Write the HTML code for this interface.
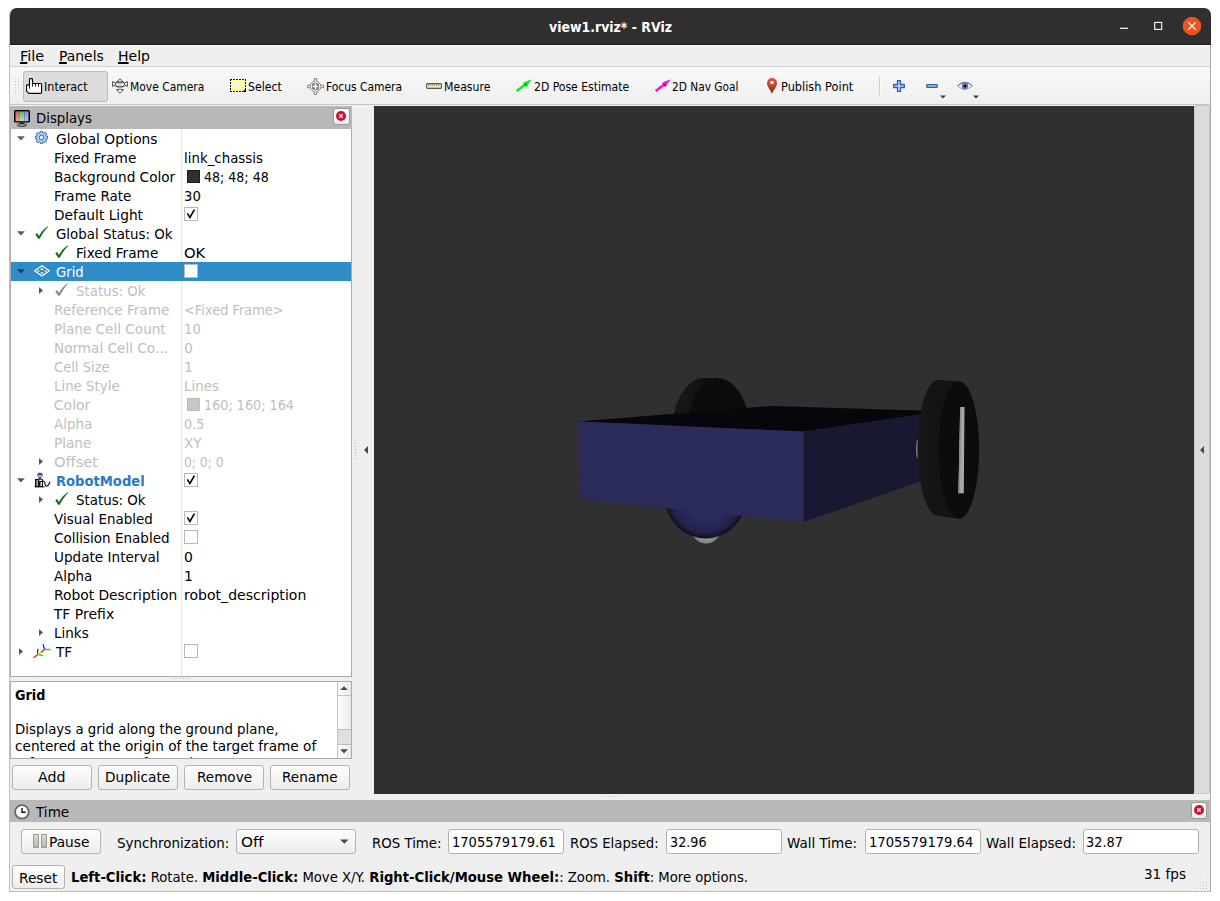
<!DOCTYPE html>
<html lang="en"><head><meta charset="utf-8"><title>view1.rviz* - RViz</title>
<style>
html,body{margin:0;padding:0;background:#fff;}
body{width:1220px;height:901px;position:relative;overflow:hidden;font-family:"DejaVu Sans", "Liberation Sans", sans-serif;font-size:14px;}
#win div,#win svg{position:absolute;box-sizing:border-box;}
#win{position:absolute;left:0;top:0;width:1220px;height:901px;}
u{text-decoration-thickness:2px;text-underline-offset:1px;}
.t{position:absolute;white-space:nowrap;line-height:20px;height:20px;transform-origin:0 50%;}
</style></head><body>
<div id="win">
<div style="left:9px;top:8px;width:1202px;height:884px;background:#efefef;border-radius:7px 7px 0 0;border:1px solid #c0c0c0;border-right-color:#a8a8a8;border-top:none;"></div>
<div style="left:10px;top:8px;width:1201px;height:37px;background:#302e2f;border-radius:7px 7px 0 0;"></div>
<div style="left:10px;top:44px;width:1201px;height:1px;background:#1c1b1c;"></div>
<svg style="left:1110px;top:14px" width="96" height="26" viewBox="1110 14 96 26"><rect x="1120" y="27.7" width="8" height="1.2" fill="#fff"/><rect x="1154.7" y="22.4" width="7" height="7" fill="none" stroke="#fff" stroke-width="1.1"/><circle cx="1192" cy="26" r="9.3" fill="#e95420"/><path d="M1188.4 22.4 L1195.6 29.6 M1195.6 22.4 L1188.4 29.6" stroke="#fff" stroke-width="1.3" fill="none"/></svg>
<div style="left:10px;top:45px;width:1200px;height:21px;background:#efefef;"></div>
<div style="left:10px;top:45px;width:1200px;height:1px;background:#fbfbfb;"></div>
<div style="left:10px;top:66px;width:1200px;height:1px;background:#d2d2d2;"></div>
<div style="left:10px;top:67px;width:1200px;height:37px;background:linear-gradient(#f8f8f8,#efefef);"></div>
<div style="left:10px;top:104px;width:1200px;height:1px;background:#c3c3c3;"></div>
<div style="left:10px;top:105px;width:1200px;height:1px;background:#f4f4f4;"></div>
<svg style="left:14px;top:77px" width="6" height="18" viewBox="0 0 6 18"><rect x="1" y="1" width="1" height="1" fill="#c4c4c4"/><rect x="4" y="1" width="1" height="1" fill="#c4c4c4"/><rect x="1" y="4" width="1" height="1" fill="#c4c4c4"/><rect x="4" y="4" width="1" height="1" fill="#c4c4c4"/><rect x="1" y="7" width="1" height="1" fill="#c4c4c4"/><rect x="4" y="7" width="1" height="1" fill="#c4c4c4"/><rect x="1" y="10" width="1" height="1" fill="#c4c4c4"/><rect x="4" y="10" width="1" height="1" fill="#c4c4c4"/><rect x="1" y="13" width="1" height="1" fill="#c4c4c4"/><rect x="4" y="13" width="1" height="1" fill="#c4c4c4"/><rect x="1" y="16" width="1" height="1" fill="#c4c4c4"/><rect x="4" y="16" width="1" height="1" fill="#c4c4c4"/></svg>
<div style="left:23px;top:71px;width:85px;height:31px;background:#dcdcdc;border:1px solid #b9b9b9;border-radius:3px;"></div>
<svg style="left:26px;top:78px" width="17" height="17" viewBox="0 0 17 17"><path d="M3.5 6.8 V1.7 Q3.5 0.4 5 0.4 Q6.5 0.4 6.5 1.7 V5.5 H14.8 Q15.6 5.5 15.6 6.5 V14.2 Q15.6 15.4 14.4 15.4 H2.9 L0.5 13.2 V7.9 Q0.5 6.8 1.6 6.8 Z" fill="#fff" stroke="#000" stroke-width="1.15" stroke-linejoin="round"/><path d="M3.5 6.8 V10.6 M6.5 5.5 V8.6 M9.5 5.8 V8.6 M12.5 5.8 V8.6" stroke="#222" stroke-width="1" fill="none"/></svg>
<svg style="left:112px;top:78px" width="16" height="16" viewBox="0 0 16 16"><g fill="#fff" stroke="#4a4a4a" stroke-width="1" stroke-linejoin="round"><path d="M8 0.8 L12 4.6 H4 Z"/><path d="M0.6 3.6 L3.6 5.2 L3.6 6.8 L0.6 8.4 Z"/><path d="M15.4 3.6 L12.4 5.2 L12.4 6.8 L15.4 8.4 Z"/><path d="M8 15.2 L4.4 11.6 H11.6 Z"/><ellipse cx="8" cy="6.2" rx="4.6" ry="2.4" fill="none"/><path d="M3.4 8.2 Q8 10.8 12.6 8.2" fill="none"/></g><rect x="7.2" y="4.6" width="1.6" height="7" fill="#b5b5b5"/></svg>
<svg style="left:230px;top:79px" width="16" height="13" viewBox="0 0 16 13"><g shape-rendering="crispEdges"><rect x="1" y="1" width="14" height="11" fill="#fffd86"/><rect x="2" y="2" width="12" height="9" fill="#fcf6c2"/><rect x="0.5" y="0.5" width="15" height="12" fill="none" stroke="#fff" stroke-width="1"/><path d="M0 0.5 H16 M0 12.5 H16" fill="none" stroke="#1c1c1c" stroke-width="1" stroke-dasharray="2 1"/><path d="M0.5 0 V13 M15.5 0 V13" fill="none" stroke="#000" stroke-width="1" stroke-dasharray="2 1"/></g><path d="M16 9.4 V13 H12.4 Z" fill="#000"/></svg>
<svg style="left:307px;top:78px" width="17" height="17" viewBox="0 0 17 17"><g fill="none" stroke="#7a7a7a" stroke-width="1"><circle cx="8.5" cy="8.5" r="5.3" fill="#fff"/><path d="M7.3 3.4 V0.6 H9.7 V3.4 M7.3 13.6 V16.4 H9.7 V13.6 M3.4 7.3 H0.6 V9.7 H3.4 M13.6 7.3 H16.4 V9.7 H13.6" fill="#fff"/><circle cx="8.5" cy="8.5" r="3.4" stroke="#6e6e6e"/></g><path d="M5.6 5.6 H7.7 V7.7 H5.6 Z M9.3 5.6 H11.4 V7.7 H9.3 Z M5.6 9.3 H7.7 V11.4 H5.6 Z M9.3 9.3 H11.4 V11.4 H9.3 Z" fill="#777"/></svg>
<svg style="left:426px;top:83px" width="16" height="6" viewBox="0 0 16 6"><rect x="0.6" y="0.6" width="14.8" height="4.8" rx="1" fill="#f4edb0" stroke="#585858" stroke-width="1.2"/><rect x="2.3" y="1.2" width="0.8" height="1.7" fill="#777"/><rect x="4.3" y="1.2" width="0.8" height="1.7" fill="#777"/><rect x="6.3" y="1.2" width="0.8" height="1.7" fill="#777"/><rect x="8.3" y="1.2" width="0.8" height="1.7" fill="#777"/><rect x="10.3" y="1.2" width="0.8" height="1.7" fill="#777"/><rect x="12.3" y="1.2" width="0.8" height="1.7" fill="#777"/></svg>
<svg style="left:515px;top:78px" width="18" height="16" viewBox="0 0 18 16"><path d="M0.9 12 L8.8 5.9 L7.95 4.8 L16.8 1.3 L11.25 9 L10.4 7.9 L2.5 14 Z" fill="#00f020"/><path d="M8.9 6 L11.25 9 L12.7 7.2 L10.3 5.4 Z" fill="#009a18" opacity="0.75"/></svg>
<svg style="left:653.5px;top:78px" width="18" height="16" viewBox="0 0 18 16"><path d="M0.9 12 L8.8 5.9 L7.95 4.8 L16.8 1.3 L11.25 9 L10.4 7.9 L2.5 14 Z" fill="#f018d8"/><path d="M8.9 6 L11.25 9 L12.7 7.2 L10.3 5.4 Z" fill="#a00090" opacity="0.75"/></svg>
<svg style="left:766px;top:77px" width="12" height="18" viewBox="0 0 12 18"><defs><linearGradient id="pg" x1="0" y1="0" x2="0" y2="1"><stop offset="0" stop-color="#ee4a2c"/><stop offset="0.45" stop-color="#c8452a"/><stop offset="1" stop-color="#5a3a08"/></linearGradient></defs><path d="M6 16.8 C4.6 13 1 10 1 6 A5 5 0 0 1 11 6 C11 10 7.4 13 6 16.8 Z" fill="url(#pg)"/><circle cx="6" cy="5.6" r="1.8" fill="#fff"/></svg>
<svg style="left:893px;top:80px" width="12" height="12" viewBox="0 0 12 12"><defs><linearGradient id="bg1" x1="0" y1="0" x2="0" y2="1"><stop offset="0" stop-color="#9cc0e6"/><stop offset="1" stop-color="#c9ddf2"/></linearGradient></defs><path d="M4.5 0.7 H7.5 V4.5 H11.3 V7.5 H7.5 V11.3 H4.5 V7.5 H0.7 V4.5 H4.5 Z" fill="url(#bg1)" stroke="#2c62ab" stroke-width="1.3" stroke-linejoin="round"/></svg>
<svg style="left:926px;top:84px" width="12" height="4" viewBox="0 0 12 4"><rect x="0.7" y="0.6" width="10.6" height="2.8" rx="0.6" fill="#a8c8ea" stroke="#2c62ab" stroke-width="1.2"/></svg>
<svg style="left:940px;top:95px" width="6" height="4" viewBox="0 0 6 4"><path d="M0 0.4 H6 L3 3.4 Z" fill="#3c3c3c"/></svg>
<svg style="left:957px;top:80px" width="16" height="12" viewBox="0 0 16 12"><path d="M0.6 6 Q8 -1.2 15.4 6 Q8 12.6 0.6 6 Z" fill="#fff" stroke="#9a9a9a" stroke-width="1"/><path d="M0.8 5.6 Q8 -1 15.2 5.6" fill="none" stroke="#6a6a6a" stroke-width="1"/><circle cx="8" cy="6" r="3.4" fill="#6878c8"/><circle cx="8" cy="6" r="1.5" fill="#0a0a18"/></svg>
<svg style="left:973px;top:95px" width="6" height="4" viewBox="0 0 6 4"><path d="M0 0.4 H6 L3 3.4 Z" fill="#3c3c3c"/></svg>
<div style="left:879px;top:77px;width:1px;height:19px;background:#cfcfcf;"></div>
<div style="left:880px;top:77px;width:1px;height:19px;background:#fbfbfb;"></div>
<div style="left:10px;top:106px;width:342px;height:23px;background:#b8b8b8;"></div>
<div style="left:332.5px;top:108px;width:17px;height:16.5px;background:linear-gradient(#ffffff,#ececec);border:1px solid #999;border-radius:3px;"></div>
<svg style="left:335px;top:110.2px" width="12" height="12" viewBox="-6 -6 12 12"><circle r="5" fill="#cf1030"/><path d="M-1.7 -1.7 L1.7 1.7 M1.7 -1.7 L-1.7 1.7" stroke="#f6dfe3" stroke-width="1.5"/></svg>
<div style="left:10px;top:129px;width:342px;height:548px;background:#fff;border:1px solid #ababab;border-top:none;"></div>
<div style="left:181px;top:129px;width:1px;height:547px;background:#e4e4e4;"></div>
<div style="left:11px;top:262px;width:340px;height:19px;background:#308cc6;"></div>
<div style="left:187px;top:170px;width:13px;height:13px;background:#303030;border:1px solid #1c1c1c;"></div>
<div style="left:187px;top:398px;width:13px;height:13px;background:#c6c6c6;border:1px solid #bdbdbd;"></div>
<svg style="left:14px;top:110px" width="16" height="17" viewBox="0 0 16 17"><defs><linearGradient id="mr" x1="0" y1="0" x2="0" y2="1"><stop offset="0" stop-color="#c46262"/><stop offset="1" stop-color="#f4a4a4"/></linearGradient><linearGradient id="mg" x1="0" y1="0" x2="0" y2="1"><stop offset="0" stop-color="#62ba62"/><stop offset="1" stop-color="#a6eca6"/></linearGradient><linearGradient id="mb" x1="0" y1="0" x2="0" y2="1"><stop offset="0" stop-color="#8a8ae0"/><stop offset="1" stop-color="#bcbcff"/></linearGradient></defs><rect x="0" y="0" width="16" height="12.6" rx="1.6" fill="#000"/><rect x="1.5" y="1.4" width="4.4" height="9.8" fill="url(#mr)"/><rect x="5.9" y="1.4" width="4.4" height="9.8" fill="url(#mg)"/><rect x="10.3" y="1.4" width="4.2" height="9.8" fill="url(#mb)"/><path d="M6.4 12.4 H9.6 L10.4 14.2 H5.6 Z" fill="#000"/><ellipse cx="8" cy="15" rx="4.7" ry="1.2" fill="#d8d8d8" stroke="#111" stroke-width="1"/></svg>
<svg style="left:16.3px;top:135px" width="10" height="7" viewBox="0 0 10 7"><path d="M1 1.2 H8.8 L4.9 5.6 Z" fill="#5a5a5a"/></svg>
<svg style="left:16.3px;top:230px" width="10" height="7" viewBox="0 0 10 7"><path d="M1 1.2 H8.8 L4.9 5.6 Z" fill="#5a5a5a"/></svg>
<svg style="left:16.3px;top:477px" width="10" height="7" viewBox="0 0 10 7"><path d="M1 1.2 H8.8 L4.9 5.6 Z" fill="#5a5a5a"/></svg>
<svg style="left:16.3px;top:268px" width="10" height="7" viewBox="0 0 10 7"><path d="M1 1.2 H8.8 L4.9 5.6 Z" fill="#173d58"/></svg>
<svg style="left:18px;top:647px" width="7" height="10" viewBox="0 0 7 10"><path d="M1 1 V8 L5 4.5 Z" fill="#5a5a5a"/></svg>
<svg style="left:38px;top:286px" width="7" height="10" viewBox="0 0 7 10"><path d="M1 1 V8 L5 4.5 Z" fill="#5a5a5a"/></svg>
<svg style="left:38px;top:457px" width="7" height="10" viewBox="0 0 7 10"><path d="M1 1 V8 L5 4.5 Z" fill="#5a5a5a"/></svg>
<svg style="left:38px;top:495px" width="7" height="10" viewBox="0 0 7 10"><path d="M1 1 V8 L5 4.5 Z" fill="#5a5a5a"/></svg>
<svg style="left:38px;top:628px" width="7" height="10" viewBox="0 0 7 10"><path d="M1 1 V8 L5 4.5 Z" fill="#5a5a5a"/></svg>
<svg style="left:35px;top:131px" width="13" height="13" viewBox="0 0 13 13"><path d="M5.25 0.33 L7.75 0.33 L7.95 2.13 L8.56 2.39 L9.98 1.25 L11.75 3.02 L10.61 4.44 L10.87 5.05 L12.67 5.25 L12.67 7.75 L10.87 7.95 L10.61 8.56 L11.75 9.98 L9.98 11.75 L8.56 10.61 L7.95 10.87 L7.75 12.67 L5.25 12.67 L5.05 10.87 L4.44 10.61 L3.02 11.75 L1.25 9.98 L2.39 8.56 L2.13 7.95 L0.33 7.75 L0.33 5.25 L2.13 5.05 L2.39 4.44 L1.25 3.02 L3.02 1.25 L4.44 2.39 L5.05 2.13 Z" fill="#b4cdea" stroke="#2f6fbd" stroke-width="1" stroke-linejoin="round"/><circle cx="6.5" cy="6.5" r="2.3" fill="#dfeaf7" stroke="#2f6fbd" stroke-width="1"/><circle cx="6.5" cy="6.5" r="0.9" fill="#fff"/></svg>
<svg style="left:35px;top:226px" width="14" height="14" viewBox="0 0 14 14"><path d="M0.3 8.2 L2.2 7.1 L3.9 10 C6 6 9 2.6 12.8 0.2 L13.2 0.8 C10 4 7 8.5 4.7 12.8 L3.1 12.8 Z" fill="#176b1a"/></svg>
<svg style="left:55px;top:245px" width="14" height="14" viewBox="0 0 14 14"><path d="M0.3 8.2 L2.2 7.1 L3.9 10 C6 6 9 2.6 12.8 0.2 L13.2 0.8 C10 4 7 8.5 4.7 12.8 L3.1 12.8 Z" fill="#176b1a"/></svg>
<svg style="left:55px;top:283px" width="14" height="14" viewBox="0 0 14 14"><path d="M0.3 8.2 L2.2 7.1 L3.9 10 C6 6 9 2.6 12.8 0.2 L13.2 0.8 C10 4 7 8.5 4.7 12.8 L3.1 12.8 Z" fill="#8a8a8a"/></svg>
<svg style="left:55px;top:492px" width="14" height="14" viewBox="0 0 14 14"><path d="M0.3 8.2 L2.2 7.1 L3.9 10 C6 6 9 2.6 12.8 0.2 L13.2 0.8 C10 4 7 8.5 4.7 12.8 L3.1 12.8 Z" fill="#176b1a"/></svg>
<svg style="left:34px;top:265px" width="16" height="12" viewBox="0 0 16 12"><path d="M8 0.7 L15.3 5.8 L8 10.9 L0.7 5.8 Z" fill="#2a6f9e" stroke="#fff" stroke-width="1.2" stroke-linejoin="round"/><path d="M8 2.6 L10.2 4.2 L8 5.7 L5.8 4.2 Z M11.5 5 L13.2 5.8 L11.5 7.3 L9.3 5.8 Z M4.5 5 L6.7 5.8 L4.5 7.3 L2.8 5.8 Z M8 6.6 L10.2 7.9 L8 9.4 L5.8 7.9 Z" fill="#b8dcf4"/></svg>
<svg style="left:34px;top:472px" width="17" height="16" viewBox="0 0 17 16"><ellipse cx="6" cy="3" rx="2.6" ry="2.1" fill="#f4f4f4" stroke="#222" stroke-width="0.5"/><path d="M3.6 2.4 Q6 -0.4 8.4 2.4 Z" fill="#2233aa"/><rect x="3.6" y="2.3" width="4.8" height="1" fill="#1a2a9a"/><rect x="1" y="7" width="8" height="8" fill="#111"/><rect x="2.6" y="8" width="1" height="6" fill="#fff"/><rect x="5.2" y="7.6" width="2.6" height="1.4" fill="#fff"/><rect x="6.4" y="10" width="1.6" height="4" fill="#ddd"/><rect x="4.6" y="5.2" width="2.6" height="2" fill="#333"/><path d="M9 9 Q11 9 11 12 Q11.4 14.6 13.4 14 Q15 13 16 9.6" fill="none" stroke="#111" stroke-width="1.2"/><rect x="0.6" y="14.4" width="10" height="1" fill="#111"/></svg>
<svg style="left:33px;top:643px" width="18" height="16" viewBox="0 0 18 16"><g fill="none" stroke-width="1.3" stroke-linecap="round"><path d="M1.2 14.6 L4.6 11.6" stroke="#ff1010"/><path d="M4.7 11 V6.4" stroke="#2020ff"/><path d="M5.2 11.5 L9.6 12.6" stroke="#10e010"/><path d="M5.2 11 L8.6 9" stroke="#f0e010"/><path d="M8.6 9 L11.6 6.6" stroke="#ff1010"/><path d="M11.4 6.2 L10.2 1.6" stroke="#2020ff"/><path d="M11.8 6.5 H17" stroke="#10e010"/></g></svg>
<svg style="left:184px;top:207px" width="14" height="14" viewBox="0 0 14 14"><rect x="0.5" y="0.5" width="13" height="13" fill="#fff" stroke="#b8b8b8" stroke-width="1"/><path d="M3.3 6.4 L5.9 10.4 L10.4 2.6" fill="none" stroke="#000" stroke-width="1.6"/></svg>
<svg style="left:184px;top:264px" width="14" height="14" viewBox="0 0 14 14"><rect x="0.5" y="0.5" width="13" height="13" fill="#fff" stroke="#b8b8b8" stroke-width="1"/></svg>
<svg style="left:184px;top:473px" width="14" height="14" viewBox="0 0 14 14"><rect x="0.5" y="0.5" width="13" height="13" fill="#fff" stroke="#b8b8b8" stroke-width="1"/><path d="M3.3 6.4 L5.9 10.4 L10.4 2.6" fill="none" stroke="#000" stroke-width="1.6"/></svg>
<svg style="left:184px;top:511px" width="14" height="14" viewBox="0 0 14 14"><rect x="0.5" y="0.5" width="13" height="13" fill="#fff" stroke="#b8b8b8" stroke-width="1"/><path d="M3.3 6.4 L5.9 10.4 L10.4 2.6" fill="none" stroke="#000" stroke-width="1.6"/></svg>
<svg style="left:184px;top:530px" width="14" height="14" viewBox="0 0 14 14"><rect x="0.5" y="0.5" width="13" height="13" fill="#fff" stroke="#b8b8b8" stroke-width="1"/></svg>
<svg style="left:184px;top:644px" width="14" height="14" viewBox="0 0 14 14"><rect x="0.5" y="0.5" width="13" height="13" fill="#fff" stroke="#b8b8b8" stroke-width="1"/></svg>
<svg style="left:173px;top:677px" width="20" height="3" viewBox="0 0 20 3"><rect x="1" y="1" width="1" height="1" fill="#bdbdbd"/><rect x="4" y="1" width="1" height="1" fill="#bdbdbd"/><rect x="7" y="1" width="1" height="1" fill="#bdbdbd"/><rect x="10" y="1" width="1" height="1" fill="#bdbdbd"/><rect x="13" y="1" width="1" height="1" fill="#bdbdbd"/><rect x="16" y="1" width="1" height="1" fill="#bdbdbd"/></svg>
<div style="left:10px;top:681px;width:342px;height:78px;background:#fff;border:1px solid #ababab;"></div>
<div style="left:337px;top:682px;width:14px;height:76px;background:linear-gradient(90deg,#fdfdfd,#ececec);border-left:1px solid #c4c4c4;"></div>
<div style="left:338px;top:695px;width:13px;height:1px;background:#c4c4c4;"></div>
<div style="left:338px;top:729px;width:13px;height:16px;background:#dfdfdf;border-top:1px solid #bcbcbc;border-bottom:1px solid #bcbcbc;"></div>
<svg style="left:338px;top:682px" width="13" height="76" viewBox="338 682 13 76"><path d="M340.2 690 L347.8 690 L344 686.2 Z" fill="#4a4a4a"/><path d="M340.2 749.2 L347.8 749.2 L344 753.4 Z" fill="#4a4a4a"/></svg>
<div style="left:12px;top:765px;width:80px;height:25px;background:linear-gradient(#fdfdfd,#ededed);border:1px solid #b3b3b3;border-radius:3px;"></div>
<div style="left:98px;top:765px;width:80px;height:25px;background:linear-gradient(#fdfdfd,#ededed);border:1px solid #b3b3b3;border-radius:3px;"></div>
<div style="left:184px;top:765px;width:80px;height:25px;background:linear-gradient(#fdfdfd,#ededed);border:1px solid #b3b3b3;border-radius:3px;"></div>
<div style="left:270px;top:765px;width:80px;height:25px;background:linear-gradient(#fdfdfd,#ededed);border:1px solid #b3b3b3;border-radius:3px;"></div>
<svg style="left:354px;top:442px" width="3" height="20" viewBox="0 0 3 20"><rect x="1" y="1" width="1" height="1" fill="#b0b0b0"/><rect x="1" y="4" width="1" height="1" fill="#b0b0b0"/><rect x="1" y="7" width="1" height="1" fill="#b0b0b0"/><rect x="1" y="10" width="1" height="1" fill="#b0b0b0"/><rect x="1" y="13" width="1" height="1" fill="#b0b0b0"/><rect x="1" y="16" width="1" height="1" fill="#b0b0b0"/></svg>
<svg style="left:362px;top:444px" width="8" height="12" viewBox="0 0 8 12"><path d="M6 2 L6 10 L2 6 Z" fill="#4a4a4a"/></svg>
<div style="left:374px;top:106px;width:820px;height:688px;background:#303030;"></div>
<svg style="left:374px;top:106px" width="820" height="688" viewBox="374 106 820 688"><defs><radialGradient id="sph" cx="0.5" cy="0.5" r="0.5"><stop offset="0" stop-color="#33336e"/><stop offset="0.55" stop-color="#2b2b5e"/><stop offset="0.85" stop-color="#22224a"/><stop offset="0.96" stop-color="#141428"/><stop offset="1" stop-color="#0b0b16"/></radialGradient><radialGradient id="gb" cx="0.5" cy="0.6" r="0.5"><stop offset="0" stop-color="#a4a4a4"/><stop offset="0.7" stop-color="#8a8a8a"/><stop offset="1" stop-color="#4c4c4c"/></radialGradient><linearGradient id="wl" x1="0" y1="0" x2="1" y2="0"><stop offset="0" stop-color="#181818"/><stop offset="0.5" stop-color="#121212"/><stop offset="1" stop-color="#0e0e0e"/></linearGradient><linearGradient id="wr" x1="0" y1="0" x2="1" y2="0"><stop offset="0" stop-color="#181818"/><stop offset="0.5" stop-color="#131313"/><stop offset="1" stop-color="#0c0c0c"/></linearGradient><linearGradient id="hl" x1="0" y1="0" x2="0" y2="1"><stop offset="0" stop-color="#77778a"/><stop offset="0.35" stop-color="#c8c8c8"/></linearGradient></defs><ellipse cx="704" cy="439" rx="33.5" ry="61" fill="url(#wl)"/><rect x="704.5" y="378.1" width="14" height="100" fill="#111"/><ellipse cx="718.5" cy="440" rx="33" ry="61.7" fill="#0c0c0c"/><circle cx="706.1" cy="528.7" r="15" fill="url(#gb)"/><circle cx="705.7" cy="498" r="40.4" fill="url(#sph)"/><path d="M578.2 421.5 L772 405.9 L942.6 411.2 L803.8 431.5 Z" fill="#06060c"/><path d="M578.2 421.5 L803.8 431.5 L803.8 522.1 L579.5 499.4 Z" fill="#2b2b5c"/><path d="M803.8 431.5 L942.6 411.2 L942.6 473.4 L803.8 522.1 Z" fill="#181830"/><ellipse cx="917.6" cy="449" rx="1.7" ry="9.5" fill="#747474"/><ellipse cx="938" cy="448" rx="20.5" ry="68" fill="url(#wr)"/><path d="M938 380 L958.5 381.2 L958.5 518.8 L938 516 Z" fill="#141414"/><ellipse cx="958.9" cy="450" rx="20.3" ry="68.8" fill="#0c0c0c"/><path d="M960.2 407 H964.5 L963.8 493.2 H958.4 Z" fill="#a8a8a8"/><path d="M960.2 407 H961.6 L960 493.2 H958.4 Z" fill="#8e8e8e"/></svg>
<div style="left:1194px;top:105px;width:16px;height:689px;background:#dcdcdc;border:1px solid #c6c6c6;border-radius:3px;"></div>
<svg style="left:1198px;top:444px" width="8" height="12" viewBox="0 0 8 12"><path d="M6 2 L6 10 L2 6 Z" fill="#4a4a4a"/></svg>
<svg style="left:602px;top:795px" width="20" height="3" viewBox="0 0 20 3"><rect x="1" y="1" width="1" height="1" fill="#bdbdbd"/><rect x="4" y="1" width="1" height="1" fill="#bdbdbd"/><rect x="7" y="1" width="1" height="1" fill="#bdbdbd"/><rect x="10" y="1" width="1" height="1" fill="#bdbdbd"/><rect x="13" y="1" width="1" height="1" fill="#bdbdbd"/><rect x="16" y="1" width="1" height="1" fill="#bdbdbd"/></svg>
<div style="left:10px;top:800px;width:1201px;height:22px;background:#b8b8b8;"></div>
<svg style="left:14px;top:804px" width="16" height="16" viewBox="0 0 16 16"><circle cx="7.9" cy="7.9" r="6.8" fill="#fff" stroke="#686868" stroke-width="1.8"/><path d="M8 4.1 V8.3 H11.7" stroke="#111" stroke-width="1.4" fill="none"/></svg>
<div style="left:1190.7px;top:802.2px;width:16.8px;height:16.5px;background:linear-gradient(#ffffff,#ececec);border:1px solid #999;border-radius:3px;"></div>
<svg style="left:1193.1px;top:804.2px" width="12" height="12" viewBox="-6 -6 12 12"><circle r="5" fill="#cf1030"/><path d="M-1.7 -1.7 L1.7 1.7 M1.7 -1.7 L-1.7 1.7" stroke="#f6dfe3" stroke-width="1.5"/></svg>
<div style="left:21px;top:829px;width:80px;height:25px;background:linear-gradient(#fdfdfd,#ededed);border:1px solid #b3b3b3;border-radius:3px;"></div>
<div style="left:33px;top:834px;width:6px;height:14px;background:linear-gradient(#dcdcd6,#b4b4ae);border:1px solid #9a9a96;"></div>
<div style="left:41px;top:834px;width:6px;height:14px;background:linear-gradient(#dcdcd6,#b4b4ae);border:1px solid #9a9a96;"></div>
<div style="left:236px;top:829px;width:120px;height:25px;background:linear-gradient(#fdfdfd,#ededed);border:1px solid #b3b3b3;border-radius:3px;"></div>
<svg style="left:339px;top:838px" width="11" height="8" viewBox="339 838 11 8"><path d="M340 839.5 L348.6 839.5 L344.3 843.8 Z" fill="#4a4a4a"/></svg>
<div style="left:448px;top:829px;width:116px;height:25px;background:#fff;border:1px solid #b1b1b1;border-radius:3px;"></div>
<div style="left:666px;top:829px;width:116px;height:25px;background:#fff;border:1px solid #b1b1b1;border-radius:3px;"></div>
<div style="left:865px;top:829px;width:116px;height:25px;background:#fff;border:1px solid #b1b1b1;border-radius:3px;"></div>
<div style="left:1083px;top:829px;width:116px;height:25px;background:#fff;border:1px solid #b1b1b1;border-radius:3px;"></div>
<div style="left:12px;top:865px;width:53px;height:24px;background:linear-gradient(#fdfdfd,#ededed);border:1px solid #b3b3b3;border-radius:3px;"></div>
<svg style="left:1196px;top:878px" width="13" height="13" viewBox="0 0 13 13"><rect x="10" y="1" width="1" height="1" fill="#c4c4c4"/><rect x="7" y="4" width="1" height="1" fill="#c4c4c4"/><rect x="10" y="4" width="1" height="1" fill="#c4c4c4"/><rect x="4" y="7" width="1" height="1" fill="#c4c4c4"/><rect x="7" y="7" width="1" height="1" fill="#c4c4c4"/><rect x="10" y="7" width="1" height="1" fill="#c4c4c4"/><rect x="1" y="10" width="1" height="1" fill="#c4c4c4"/><rect x="4" y="10" width="1" height="1" fill="#c4c4c4"/><rect x="7" y="10" width="1" height="1" fill="#c4c4c4"/><rect x="10" y="10" width="1" height="1" fill="#c4c4c4"/></svg>
<span class="t" id="t0" style="left:549.4px;top:17px;font-size:14px;color:#fff;font-weight:bold;transform:scaleX(0.8939);">view1.rviz* - RViz</span>
<span class="t" id="t1" style="left:19.9px;top:46px;font-size:14px;color:#000;transform:scaleX(1.0361);"><u>F</u>ile</span>
<span class="t" id="t2" style="left:58.9px;top:46px;font-size:14px;color:#000;transform:scaleX(0.9938);"><u>P</u>anels</span>
<span class="t" id="t3" style="left:117.7px;top:46px;font-size:14px;color:#000;transform:scaleX(1.0024);"><u>H</u>elp</span>
<span class="t" id="t4" style="left:43.7px;top:77px;font-size:13px;color:#000;font-stretch:condensed;transform:scaleX(0.9553);">Interact</span>
<span class="t" id="t5" style="left:129.7px;top:77px;font-size:13px;color:#000;font-stretch:condensed;transform:scaleX(0.9175);">Move Camera</span>
<span class="t" id="t6" style="left:247.8px;top:77px;font-size:13px;color:#000;font-stretch:condensed;transform:scaleX(0.9337);">Select</span>
<span class="t" id="t7" style="left:325.5px;top:77px;font-size:13px;color:#000;font-stretch:condensed;transform:scaleX(0.9158);">Focus Camera</span>
<span class="t" id="t8" style="left:444.1px;top:77px;font-size:13px;color:#000;font-stretch:condensed;transform:scaleX(0.9338);">Measure</span>
<span class="t" id="t9" style="left:533.7px;top:77px;font-size:13px;color:#000;font-stretch:condensed;transform:scaleX(0.9271);">2D Pose Estimate</span>
<span class="t" id="t10" style="left:671.8px;top:77px;font-size:13px;color:#000;font-stretch:condensed;transform:scaleX(0.9053);">2D Nav Goal</span>
<span class="t" id="t11" style="left:781.4px;top:77px;font-size:13px;color:#000;font-stretch:condensed;transform:scaleX(0.9719);">Publish Point</span>
<span class="t" id="t12" style="left:35.8px;top:108px;font-size:14px;color:#000;transform:scaleX(0.9490);">Displays</span>
<span class="t" id="t13" style="left:56.0px;top:129px;font-size:14px;color:#000;transform:scaleX(0.9841);">Global Options</span>
<span class="t" id="t14" style="left:53.8px;top:148px;font-size:14px;color:#000;transform:scaleX(0.9756);">Fixed Frame</span>
<span class="t" id="t15" style="left:183.8px;top:148px;font-size:14px;color:#000;transform:scaleX(0.9554);">link_chassis</span>
<span class="t" id="t16" style="left:53.8px;top:167px;font-size:14px;color:#000;transform:scaleX(0.9732);">Background Color</span>
<span class="t" id="t17" style="left:53.8px;top:186px;font-size:14px;color:#000;transform:scaleX(0.9654);">Frame Rate</span>
<span class="t" id="t18" style="left:183.8px;top:186px;font-size:14px;color:#000;transform:scaleX(0.9423);">30</span>
<span class="t" id="t19" style="left:53.8px;top:205px;font-size:14px;color:#000;transform:scaleX(0.9829);">Default Light</span>
<span class="t" id="t20" style="left:56.0px;top:224px;font-size:14px;color:#000;transform:scaleX(0.9556);">Global Status: Ok</span>
<span class="t" id="t21" style="left:75.8px;top:243px;font-size:14px;color:#000;transform:scaleX(0.9756);">Fixed Frame</span>
<span class="t" id="t22" style="left:183.8px;top:243px;font-size:14px;color:#000;transform:scaleX(1.0543);">OK</span>
<span class="t" id="t23" style="left:56.1px;top:262px;font-size:14px;color:#fff;transform:scaleX(0.9425);">Grid</span>
<span class="t" id="t24" style="left:75.8px;top:281px;font-size:14px;color:#bebebe;transform:scaleX(0.9547);">Status: Ok</span>
<span class="t" id="t25" style="left:53.8px;top:300px;font-size:14px;color:#bebebe;transform:scaleX(0.9724);">Reference Frame</span>
<span class="t" id="t26" style="left:183.8px;top:300px;font-size:14px;color:#bebebe;transform:scaleX(0.9238);">&lt;Fixed Frame&gt;</span>
<span class="t" id="t27" style="left:53.8px;top:319px;font-size:14px;color:#bebebe;transform:scaleX(0.9709);">Plane Cell Count</span>
<span class="t" id="t28" style="left:183.8px;top:319px;font-size:14px;color:#bebebe;transform:scaleX(0.9423);">10</span>
<span class="t" id="t29" style="left:53.8px;top:338px;font-size:14px;color:#bebebe;transform:scaleX(0.9714);">Normal Cell Co…</span>
<span class="t" id="t30" style="left:183.8px;top:338px;font-size:14px;color:#bebebe;transform:scaleX(0.9975);">0</span>
<span class="t" id="t31" style="left:53.8px;top:357px;font-size:14px;color:#bebebe;transform:scaleX(0.9367);">Cell Size</span>
<span class="t" id="t32" style="left:183.8px;top:357px;font-size:14px;color:#bebebe;transform:scaleX(0.9975);">1</span>
<span class="t" id="t33" style="left:53.8px;top:376px;font-size:14px;color:#bebebe;transform:scaleX(0.9535);">Line Style</span>
<span class="t" id="t34" style="left:183.8px;top:376px;font-size:14px;color:#bebebe;transform:scaleX(0.9593);">Lines</span>
<span class="t" id="t35" style="left:53.8px;top:395px;font-size:14px;color:#bebebe;">Color</span>
<span class="t" id="t36" style="left:53.8px;top:414px;font-size:14px;color:#bebebe;transform:scaleX(0.9620);">Alpha</span>
<span class="t" id="t37" style="left:183.8px;top:414px;font-size:14px;color:#bebebe;transform:scaleX(0.9162);">0.5</span>
<span class="t" id="t38" style="left:53.8px;top:433px;font-size:14px;color:#bebebe;transform:scaleX(0.9738);">Plane</span>
<span class="t" id="t39" style="left:183.8px;top:433px;font-size:14px;color:#bebebe;transform:scaleX(0.9749);">XY</span>
<span class="t" id="t40" style="left:53.8px;top:452px;font-size:14px;color:#bebebe;transform:scaleX(1.0484);">Offset</span>
<span class="t" id="t41" style="left:183.8px;top:452px;font-size:14px;color:#bebebe;transform:scaleX(0.8766);">0; 0; 0</span>
<span class="t" id="t42" style="left:56.1px;top:471px;font-size:14px;color:#2878c5;font-weight:bold;transform:scaleX(0.9375);">RobotModel</span>
<span class="t" id="t43" style="left:75.8px;top:490px;font-size:14px;color:#000;transform:scaleX(0.9547);">Status: Ok</span>
<span class="t" id="t44" style="left:53.8px;top:509px;font-size:14px;color:#000;transform:scaleX(0.9599);">Visual Enabled</span>
<span class="t" id="t45" style="left:53.8px;top:528px;font-size:14px;color:#000;transform:scaleX(0.9661);">Collision Enabled</span>
<span class="t" id="t46" style="left:53.8px;top:547px;font-size:14px;color:#000;transform:scaleX(0.9708);">Update Interval</span>
<span class="t" id="t47" style="left:183.8px;top:547px;font-size:14px;color:#000;transform:scaleX(0.9975);">0</span>
<span class="t" id="t48" style="left:53.8px;top:566px;font-size:14px;color:#000;transform:scaleX(0.9620);">Alpha</span>
<span class="t" id="t49" style="left:183.8px;top:566px;font-size:14px;color:#000;transform:scaleX(0.9975);">1</span>
<span class="t" id="t50" style="left:53.8px;top:585px;font-size:14px;color:#000;transform:scaleX(0.9872);">Robot Description</span>
<span class="t" id="t51" style="left:183.8px;top:585px;font-size:14px;color:#000;transform:scaleX(1.0041);">robot_description</span>
<span class="t" id="t52" style="left:53.8px;top:604px;font-size:14px;color:#000;">TF Prefix</span>
<span class="t" id="t53" style="left:53.8px;top:623px;font-size:14px;color:#000;transform:scaleX(0.9647);">Links</span>
<span class="t" id="t54" style="left:56.1px;top:642px;font-size:14px;color:#000;transform:scaleX(0.9754);">TF</span>
<span class="t" id="t55" style="left:204.1px;top:167px;font-size:14px;color:#000;transform:scaleX(0.9013);">48; 48; 48</span>
<span class="t" id="t56" style="left:204.1px;top:395px;font-size:14px;color:#bebebe;transform:scaleX(0.9127);">160; 160; 164</span>
<span class="t" id="t57" style="left:14.6px;top:685px;font-size:14px;color:#000;font-weight:bold;transform:scaleX(0.9151);">Grid</span>
<span class="t" id="t58" style="left:14.6px;top:719px;font-size:14px;color:#000;transform:scaleX(0.9536);">Displays a grid along the ground plane,</span>
<span class="t" id="t59" style="left:14.6px;top:736px;font-size:14px;color:#000;transform:scaleX(0.9757);">centered at the origin of the target frame of</span>
<div style="left:12px;top:682px;width:325px;height:76px;overflow:hidden"><span class="t" id="t60" style="left:2.5999999999999996px;top:71px;font-size:14px;color:#000;">reference. <span style="color:#0000ee;text-decoration:underline">More Information</span>.</span></div>
<span class="t" id="t61" style="left:38.2px;top:767px;font-size:14px;color:#000;transform:scaleX(1.0107);">Add</span>
<span class="t" id="t62" style="left:104.9px;top:767px;font-size:14px;color:#000;transform:scaleX(0.9790);">Duplicate</span>
<span class="t" id="t63" style="left:196.6px;top:767px;font-size:14px;color:#000;transform:scaleX(0.9678);">Remove</span>
<span class="t" id="t64" style="left:282.1px;top:767px;font-size:14px;color:#000;transform:scaleX(0.9683);">Rename</span>
<span class="t" id="t65" style="left:36.4px;top:802px;font-size:14px;color:#000;transform:scaleX(0.9689);">Time</span>
<span class="t" id="t66" style="left:48.8px;top:832px;font-size:14px;color:#000;transform:scaleX(0.9809);">Pause</span>
<span class="t" id="t67" style="left:117.1px;top:833px;font-size:14px;color:#000;transform:scaleX(0.9610);">Synchronization:</span>
<span class="t" id="t68" style="left:241.1px;top:832px;font-size:14px;color:#000;transform:scaleX(1.0884);">Off</span>
<span class="t" id="t69" style="left:371.8px;top:833px;font-size:14px;color:#000;transform:scaleX(0.9512);">ROS Time:</span>
<span class="t" id="t70" style="left:451.6px;top:832px;font-size:14px;color:#000;transform:scaleX(0.9331);">1705579179.61</span>
<span class="t" id="t71" style="left:570.3px;top:833px;font-size:14px;color:#000;transform:scaleX(0.9457);">ROS Elapsed:</span>
<span class="t" id="t72" style="left:669.5px;top:832px;font-size:14px;color:#000;transform:scaleX(0.9129);">32.96</span>
<span class="t" id="t73" style="left:787.3px;top:833px;font-size:14px;color:#000;transform:scaleX(0.9638);">Wall Time:</span>
<span class="t" id="t74" style="left:868.8px;top:832px;font-size:14px;color:#000;transform:scaleX(0.9367);">1705579179.64</span>
<span class="t" id="t75" style="left:986.4px;top:833px;font-size:14px;color:#000;transform:scaleX(0.9629);">Wall Elapsed:</span>
<span class="t" id="t76" style="left:1085.9px;top:832px;font-size:14px;color:#000;transform:scaleX(0.9228);">32.87</span>
<span class="t" id="t77" style="left:19.1px;top:868px;font-size:14px;color:#000;transform:scaleX(0.9793);">Reset</span>
<span class="t" id="t78" style="left:70.7px;top:867px;font-size:14px;color:#000;transform:scaleX(0.9419);"><b>Left-Click:</b> Rotate. <b>Middle-Click:</b> Move X/Y. <b>Right-Click/Mouse Wheel:</b>: Zoom. <b>Shift</b>: More options.</span>
<span class="t" id="t79" style="left:1143.8px;top:864px;font-size:14px;color:#000;transform:scaleX(0.9683);">31 fps</span>
</div>
</body></html>
